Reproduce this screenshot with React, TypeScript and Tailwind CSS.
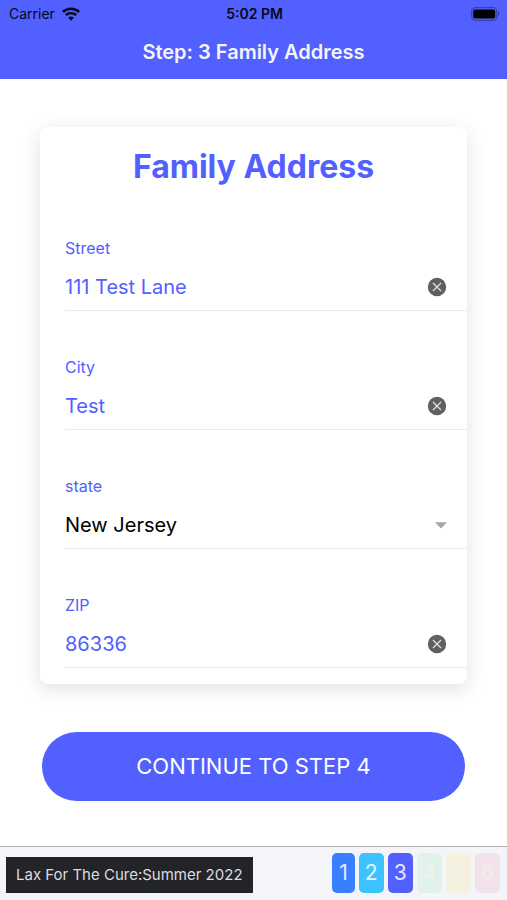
import React, { useState } from 'react';

interface Address {
  street: string;
  city: string;
  state: string;
  zip: string;
}

interface TextFieldProps {
  id: string;
  label: string;
  value: string;
  onChange: (value: string) => void;
}

const STATES = ['Connecticut', 'Delaware', 'New Jersey', 'New York', 'Pennsylvania'];

const STEPS = [
  { id: 1, className: 'bg-[#3880ff] text-white/85 px-[7px]' },
  { id: 2, className: 'bg-[#3dc2ff] text-white/85 px-1.5' },
  { id: 3, className: 'bg-[#5260ff] text-white/85 px-1.5' },
  { id: 4, className: 'bg-[#e0f2ea] text-[#e9f5f0] px-1.5' },
  { id: 5, className: 'bg-[#f5f1df] text-[#f4f1e2] px-1.5' },
  { id: 6, className: 'bg-[#f3e2e9] text-[#f5ebf0] px-1.5' },
];

const WifiIcon = () => (
  <svg width="18" height="14" viewBox="0 0 18 14" fill="none" stroke="#050822" aria-hidden="true">
    <path d="M.9 5C5.3 .6 12.7 .6 17.1 5" strokeWidth="2.6" />
    <path d="M3.8 8.2c2.9-2.8 7.5-2.8 10.4 0" strokeWidth="2.4" />
    <path d="M9 13.8l-2.9-3.1c1.6-1.5 4.2-1.5 5.8 0z" fill="#050822" stroke="none" />
  </svg>
);

const BatteryIcon = () => (
  <svg width="29" height="14" viewBox="0 0 29 14" aria-hidden="true">
    <rect x=".7" y=".7" width="25" height="12.6" rx="3.6" fill="none" stroke="#000" strokeOpacity=".32" strokeWidth="1.3" />
    <rect x="2.2" y="2.4" width="22" height="9.2" rx="2" fill="#000" />
    <path d="M27 4.8c1.8.6 1.8 3.8 0 4.4z" fill="#000" fillOpacity=".38" />
  </svg>
);

const TextField: React.FC<TextFieldProps> = ({ id, label, value, onChange }) => (
  <div className="ml-[25px] h-[119px] border-b border-[#ececee] flex flex-col justify-end">
    <label htmlFor={id} className="text-base leading-6 text-[#5260ff]">{label}</label>
    <div className="flex items-center h-[50px] pt-1 pr-5">
      <input
        id={id}
        type="text"
        value={value}
        onChange={(e) => onChange(e.target.value)}
        className="flex-1 min-w-0 text-xl text-[#5260ff] bg-transparent outline-none"
      />
      <button type="button" aria-label={`Clear ${label}`} onClick={() => onChange('')}>
        <svg width="20" height="20" viewBox="0 0 20 20" className="block">
          <circle cx="10" cy="10" r="9.2" fill="#606060" />
          <path d="M6 6l8 8M14 6l-8 8" stroke="#e2e2e2" strokeWidth="1.2" />
        </svg>
      </button>
    </div>
  </div>
);

export default function App() {
  const [address, setAddress] = useState<Address>({
    street: '111 Test Lane',
    city: 'Test',
    state: 'New Jersey',
    zip: '86336',
  });

  const update = (key: keyof Address) => (value: string) =>
    setAddress((prev) => ({ ...prev, [key]: value }));

  return (
    <div className="min-h-screen flex flex-col bg-white font-['Inter',sans-serif]">
      {/* Status bar + title */}
      <header className="bg-[#5260ff]">
        <div className="grid grid-cols-3 items-center h-7 pl-[9px] pr-[7px] text-sm text-[#050822]">
          <div className="flex items-center gap-[7px]">
            <span>Carrier</span>
            <WifiIcon />
          </div>
          <div className="text-center font-semibold">5:02 PM</div>
          <div className="flex justify-end">
            <BatteryIcon />
          </div>
        </div>
        <h1 className="h-[51px] pt-2.5 text-center text-xl font-semibold text-[#f4f5f8]">Step: 3 Family Address</h1>
      </header>

      <main className="flex-1 px-10 pt-12">
        <form onSubmit={(e) => e.preventDefault()}>
          <div className="pb-4 bg-white rounded-lg shadow-[0_5px_20px_rgba(0,0,0,0.12)]">
            <h2 className="h-[65px] pt-5 text-center text-[32px] leading-10 font-bold text-[#5260ff]">Family Address</h2>

            <TextField id="street" label="Street" value={address.street} onChange={update('street')} />
            <TextField id="city" label="City" value={address.city} onChange={update('city')} />

            <div className="ml-[25px] h-[119px] border-b border-[#ececee] flex flex-col justify-end">
              <label htmlFor="state" className="text-base leading-6 text-[#5260ff]">state</label>
              <div className="flex items-center h-[50px] pt-1 pr-5">
                <select
                  id="state"
                  value={address.state}
                  onChange={(e) => update('state')(e.target.value)}
                  className="flex-1 min-w-0 appearance-none text-xl text-black bg-transparent outline-none"
                >
                  {STATES.map((name) => (
                    <option key={name}>{name}</option>
                  ))}
                </select>
                <svg width="12" height="7" viewBox="0 0 12 7" className="pointer-events-none" aria-hidden="true">
                  <path d="M0 .3h12L6 6.5z" fill="#a6a6a6" />
                </svg>
              </div>
            </div>

            <TextField id="zip" label="ZIP" value={address.zip} onChange={update('zip')} />
          </div>

          <div className="px-0.5 pt-12">
            <button type="submit" className="w-full h-[69px] rounded-full bg-[#5260ff] text-[22px] text-white">
              CONTINUE TO STEP 4
            </button>
          </div>
        </form>
      </main>

      {/* Program name and step progress */}
      <footer className="flex items-end justify-between h-[54px] pl-1.5 pr-[7px] pb-[7px] border-t border-[#a9adac] bg-[#f4f5f8]">
        <div className="h-9 px-2.5 flex items-center bg-[#222428] text-[15px] text-[#dcdde0]">Lax For The Cure:Summer 2022</div>
        <ol className="flex gap-1">
          {STEPS.map((step) => (
            <li key={step.id} className={`h-10 flex items-center rounded-[5px] text-[21px] ${step.className}`}>
              {step.id}
            </li>
          ))}
        </ol>
      </footer>
    </div>
  );
}
